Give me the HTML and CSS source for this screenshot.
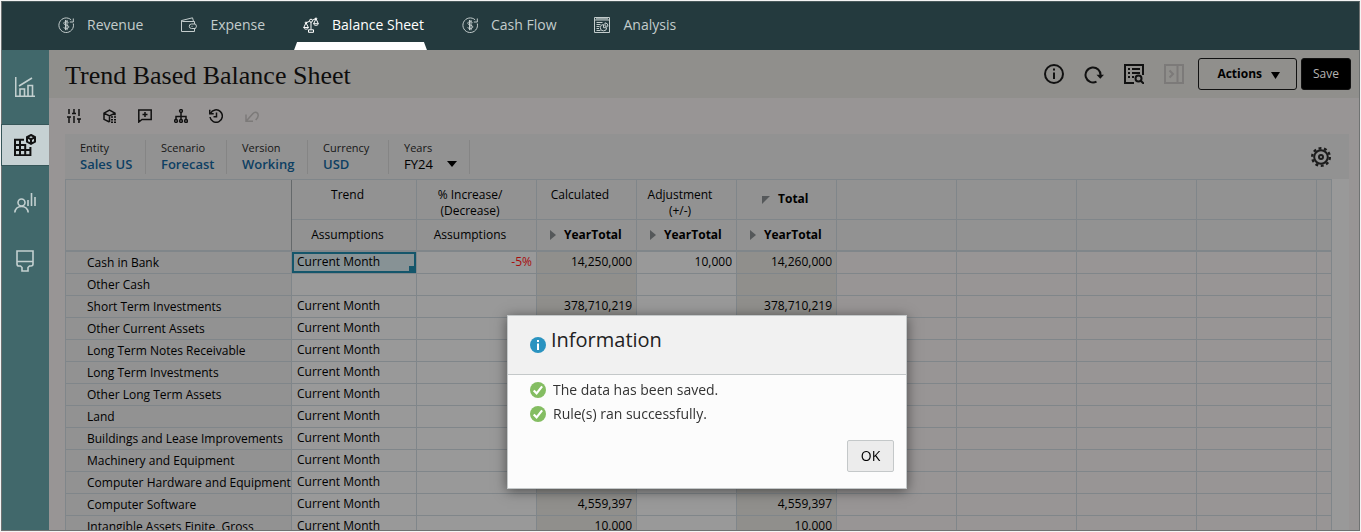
FILE: index.html
```html
<!DOCTYPE html>
<html lang="en">
<head>
    <meta charset="UTF-8">
    <meta name="viewport" content="width=device-width, initial-scale=1.0">
    <title>Trend Based Balance Sheet</title>
    <link rel="stylesheet" href="styles.css">
</head>
<body>

<!-- Shared icons -->
<svg class="sprite" aria-hidden="true">
    <symbol id="icon-money" viewBox="0 0 16 16">
        <path d="M15.300 6.500A7.300 7.300 0 1 1 13.200 2.900M15.300 1.500v3.500h-3.500M10.600 5.800C10.200 5 9.300 4.700 8.200 4.700c-1.400 0-2.400.6-2.400 1.600 0 2.400 5 1.100 5 3.500 0 1.100-1.100 1.800-2.500 1.800-1.300 0-2.300-.5-2.700-1.400M7.500 3v10.200M9 3v10.200"/>
    </symbol>
    <symbol id="icon-check" viewBox="0 0 16 16">
        <circle cx="8" cy="8" r="8" fill="#84bd62"/>
        <path d="M3.700 8.500l2.900 2.900 5.500-7" fill="none" stroke="#fff" stroke-width="2.200"/>
    </symbol>
</svg>

<div class="app">
    <nav class="tabs">
        <a class="tab" href="#"><svg class="tab-icon"><use href="#icon-money"/></svg>Revenue</a>
        <a class="tab" href="#">
            <svg class="tab-icon" viewBox="0 0 16 16"><path d="M13.500 7V4.500H1.500a1 1 0 0 1-1-1M.5 3.500v11h13v-3M.7 3.500L11.500.8l1 3.500M10.500 7h4l1 2.200-1 2.300h-4a2.200 2.200 0 0 1 0-4.500zM10.500 9.300h1"/></svg>Expense</a>
        <a class="tab active" href="#">
            <svg class="tab-icon" viewBox="0 0 16 16"><path d="M8 5v7.500M5.500 15.300v-2.500h5v2.500zM3 5.800L6.500 4.300M9.500 3.200L13 1.500M3 5.800L.8 10.500M3 5.800l2.400 4.700M13 1.700l-2.300 5M13 1.700l2.300 5M.6 10.500h4.900M10.500 6.700h4.900"/><path d="M.8 10.500c.3 2.200 4.300 2.200 4.600 0M10.700 6.700c.3 2.200 4.300 2.200 4.600 0"/><circle cx="8" cy="3.700" r="1.500"/><circle cx="13" cy="1.700" r=".8"/><circle cx="3" cy="5.800" r=".8"/></svg>Balance Sheet</a>
        <a class="tab" href="#"><svg class="tab-icon"><use href="#icon-money"/></svg>Cash Flow</a>
        <a class="tab" href="#">
            <svg class="tab-icon" viewBox="0 0 16 16"><path d="M.5.5h15v15H.5zM.5 3h15M2 1.800h12M2.500 5.500h6M2.500 7.500h4M2.500 9.500h3M2.500 11.500h2.500M2.500 13.500h4M9.500 7.500a3.200 3.200 0 1 0 3.200 3.200H9.500zM11 9.200V5.800a3.300 3.300 0 0 1 3 3.400z"/></svg>Analysis</a>
    </nav>

    <div class="body">
        <nav class="sidebar">
            <a class="side-link" href="#" aria-label="Dashboards">
                <svg width="20" height="20" viewBox="0 0 20 20"><path d="M.7 0v19.300H20M4 9l13-8M5 19v-7h4.500v7M13 19V8.500h4.500V19"/></svg>
            </a>
            <a class="side-link active" href="#" aria-label="Forms">
                <svg width="22" height="22" viewBox="0 0 22 22"><path d="M10 5.800H1v15.400h15.400V13M1 11h11M1 16h15.400M6 5.800v15.400M11.200 10v11.200M17 1l4 2v4.600l-4 2.300-4-2.300V3zM13 3.200l4 2.200 4-2.200M17 5.200v4.500"/></svg>
            </a>
            <a class="side-link" href="#" aria-label="Users">
                <svg width="22" height="20" viewBox="0 0 22 20"><circle cx="7.500" cy="9.500" r="3.500"/><path d="M.8 19.500c.5-4 3.300-6 6.700-6s6.200 2 6.700 6M14 7v6M17.500 0v13M21 4v9"/></svg>
            </a>
            <a class="side-link" href="#" aria-label="Display">
                <svg width="18" height="22" viewBox="0 0 18 22"><path d="M1 1h16v13c0 1.500-.6 2-2 2h-1.500L12 17.500V21H6v-3.500L4.500 16H3c-1.400 0-2-.5-2-2zM1 11.500h16"/></svg>
            </a>
        </nav>

        <main class="content">
            <header class="title-bar">
                <h1>Trend Based Balance Sheet</h1>
                <div class="title-tools">
                    <button class="icon-btn" aria-label="Information">
                        <svg width="20" height="20" viewBox="0 0 20 20"><circle cx="10" cy="10" r="9"/><path d="M10 8.500V15M10 4.500v2"/></svg>
                    </button>
                    <button class="icon-btn" aria-label="Refresh">
                        <svg width="20" height="20" viewBox="0 0 20 20"><path d="M12.500 17.600A7.500 7.500 0 1 1 16.500 11.500"/><path class="solid" d="M12.500 10.800h7.500l-3.700 4z"/></svg>
                    </button>
                    <button class="icon-btn" aria-label="Details">
                        <svg width="20" height="20" viewBox="0 0 20 20"><path d="M10 19H1V1h18v10M4 5h2M8 5h8M4 9h2M8 9h8M4 13h2M8 13h2M16.500 16.500L20 20"/><circle cx="14.500" cy="14.500" r="3"/></svg>
                    </button>
                    <button class="icon-btn" aria-label="Open panel" disabled>
                        <svg width="20" height="20" viewBox="0 0 20 20"><path d="M1 1h18v18H1zM13.500 1v18M5.500 6.500L9 10l-3.500 3.500"/></svg>
                    </button>
                </div>
                <button class="btn">Actions <svg width="9" height="7" viewBox="0 0 9 7"><path d="M0 0h9L4.500 7z"/></svg></button>
                <button class="btn primary">Save</button>
            </header>

            <div class="toolbar">
                <button class="icon-btn" aria-label="Adjust">
                    <svg width="14" height="14" viewBox="0 0 14 14"><path d="M2 0v5M2 8v6M0 8h4M7 0v4M5 4.500h4M7 7v7M12 0v7M10 10h4M12 10v4"/></svg>
                </button>
                <button class="icon-btn" aria-label="Cube">
                    <svg width="14" height="14" viewBox="0 0 14 14"><path d="M6.500 13L1 10.300V4.200L6.500 1 12 4.200v2M1 4.200L6.500 7 12 4.200M6.500 7v6"/><path stroke-dasharray="2 1" d="M8 8h6M8 10.700h6M8 13.300h6"/></svg>
                </button>
                <button class="icon-btn" aria-label="Comment">
                    <svg width="14" height="14" viewBox="0 0 14 14"><path d="M.8 13V1h12.400v9.500H4zM7 3v5M4.500 5.500h5"/></svg>
                </button>
                <button class="icon-btn" aria-label="Hierarchy">
                    <svg width="14" height="14" viewBox="0 0 14 14"><circle cx="7" cy="2" r="1.400"/><circle cx="2" cy="12" r="1.400"/><circle cx="7" cy="12" r="1.400"/><circle cx="12" cy="12" r="1.400"/><path d="M7 3.500v7M2 10.500v-3h10v3"/></svg>
                </button>
                <button class="icon-btn" aria-label="History">
                    <svg width="14" height="14" viewBox="0 0 14 14"><path d="M1.500 4.500A6.200 6.200 0 1 1 1 8M.7.8v4h4M7.500 3.500v4.200H4.500"/></svg>
                </button>
                <button class="icon-btn" aria-label="Undo" disabled>
                    <svg width="14" height="14" viewBox="0 0 14 14"><path d="M1 5.500v6.800h7M1.500 11.800L8 4.500c2.300-2.500 5.300-.8 5.200 2-.1 2-1.200 3-2.500 4.500"/></svg>
                </button>
            </div>

            <div class="pov">
                <div class="dim"><span class="dim-name">Entity</span><a href="#">Sales US</a></div>
                <div class="dim"><span class="dim-name">Scenario</span><a href="#">Forecast</a></div>
                <div class="dim"><span class="dim-name">Version</span><a href="#">Working</a></div>
                <div class="dim"><span class="dim-name">Currency</span><a href="#">USD</a></div>
                <div class="dim">
                    <label class="dim-name" for="years">Years</label>
                    <div class="picker">
                        <select id="years"><option>FY24</option></select>
                        <svg width="10" height="6" viewBox="0 0 10 6"><path d="M0 0h10L5 6z"/></svg>
                    </div>
                </div>
                <button class="icon-btn settings" aria-label="Settings">
                    <svg width="20" height="20" viewBox="0 0 20 20"><circle cx="10" cy="10" r="6.800"/><circle cx="10" cy="10" r="2"/><circle class="teeth" cx="10" cy="10" r="8.800"/></svg>
                </button>
            </div>

            <div class="grid-wrap">
                <table class="grid">
                    <colgroup>
                        <col class="c-name"><col class="c-trend"><col class="c-wide"><col class="c-mid"><col class="c-mid"><col class="c-mid">
                        <col class="c-wide"><col class="c-wide"><col class="c-wide"><col class="c-wide"><col>
                    </colgroup>
                    <thead>
                        <tr class="head-top">
                            <td class="corner" rowspan="2"></td>
                            <th>Trend</th>
                            <th>% Increase/<br>(Decrease)</th>
                            <th>Calculated</th>
                            <th>Adjustment<br>(+/-)</th>
                            <th class="member total"><svg width="8" height="8" viewBox="0 0 8 8"><path d="M0 0h8L0 8z"/></svg>Total</th>
                            <th></th><th></th><th></th><th></th><th></th>
                        </tr>
                        <tr class="head-sub">
                            <th>Assumptions</th>
                            <th>Assumptions</th>
                            <th class="member"><svg width="6" height="10" viewBox="0 0 6 10"><path d="M0 0l6 5-6 5z"/></svg>YearTotal</th>
                            <th class="member"><svg width="6" height="10" viewBox="0 0 6 10"><path d="M0 0l6 5-6 5z"/></svg>YearTotal</th>
                            <th class="member"><svg width="6" height="10" viewBox="0 0 6 10"><path d="M0 0l6 5-6 5z"/></svg>YearTotal</th>
                            <th></th><th></th><th></th><th></th><th></th>
                        </tr>
                    </thead>
                    <tbody>
                        <tr><th>Cash in Bank</th><td class="selected">Current Month</td><td class="num neg">-5%</td><td class="num calc">14,250,000</td><td class="num">10,000</td><td class="num calc">14,260,000</td><td></td><td></td><td></td><td></td><td></td></tr>
                        <tr><th>Other Cash</th><td></td><td></td><td class="calc"></td><td></td><td class="calc"></td><td></td><td></td><td></td><td></td><td></td></tr>
                        <tr><th>Short Term Investments</th><td>Current Month</td><td></td><td class="num calc">378,710,219</td><td></td><td class="num calc">378,710,219</td><td></td><td></td><td></td><td></td><td></td></tr>
                        <tr><th>Other Current Assets</th><td>Current Month</td><td></td><td class="calc"></td><td></td><td class="calc"></td><td></td><td></td><td></td><td></td><td></td></tr>
                        <tr><th>Long Term Notes Receivable</th><td>Current Month</td><td></td><td class="calc"></td><td></td><td class="calc"></td><td></td><td></td><td></td><td></td><td></td></tr>
                        <tr><th>Long Term Investments</th><td>Current Month</td><td></td><td class="calc"></td><td></td><td class="calc"></td><td></td><td></td><td></td><td></td><td></td></tr>
                        <tr><th>Other Long Term Assets</th><td>Current Month</td><td></td><td class="calc"></td><td></td><td class="calc"></td><td></td><td></td><td></td><td></td><td></td></tr>
                        <tr><th>Land</th><td>Current Month</td><td></td><td class="calc"></td><td></td><td class="calc"></td><td></td><td></td><td></td><td></td><td></td></tr>
                        <tr><th>Buildings and Lease Improvements</th><td>Current Month</td><td></td><td class="calc"></td><td></td><td class="calc"></td><td></td><td></td><td></td><td></td><td></td></tr>
                        <tr><th>Machinery and Equipment</th><td>Current Month</td><td></td><td class="calc"></td><td></td><td class="calc"></td><td></td><td></td><td></td><td></td><td></td></tr>
                        <tr><th>Computer Hardware and Equipment</th><td>Current Month</td><td></td><td class="calc"></td><td></td><td class="calc"></td><td></td><td></td><td></td><td></td><td></td></tr>
                        <tr><th>Computer Software</th><td>Current Month</td><td></td><td class="num calc">4,559,397</td><td></td><td class="num calc">4,559,397</td><td></td><td></td><td></td><td></td><td></td></tr>
                        <tr><th>Intangible Assets Finite, Gross</th><td>Current Month</td><td></td><td class="num calc">10,000</td><td></td><td class="num calc">10,000</td><td></td><td></td><td></td><td></td><td></td></tr>
                    </tbody>
                </table>
            </div>
        </main>
    </div>
</div>

<!-- Save confirmation -->
<div class="overlay">
    <div class="dialog" role="dialog" aria-labelledby="dialog-title">
        <div class="dialog-head">
            <svg width="16" height="16" viewBox="0 0 16 16"><circle cx="8" cy="8" r="8" fill="#2a93c0"/><path d="M7 3h2v2H7zM7 6.500h2V13H7z" fill="#fff"/></svg>
            <h2 id="dialog-title">Information</h2>
        </div>
        <ul class="messages">
            <li><svg width="16" height="16"><use href="#icon-check"/></svg>The data has been saved.</li>
            <li><svg width="16" height="16"><use href="#icon-check"/></svg>Rule(s) ran successfully.</li>
        </ul>
        <div class="dialog-foot">
            <button class="ok-btn">OK</button>
        </div>
    </div>
</div>

</body>
</html>
```
FILE: styles.css
```css
* {
    box-sizing: border-box;
}
body {
    margin: 0;
    padding: 1px;
    height: 100vh;
    overflow: hidden;
    background-color: #f4f4f4;
    font-family: "Open Sans", "Noto Sans", sans-serif;
    font-size: 12px;
    color: #000;
}
button, select {
    font-family: inherit;
    color: inherit;
}
svg {
    display: block;
    flex: none;
}
.sprite {
    position: absolute;
    width: 0;
    height: 0;
}
.app {
    height: 100%;
    display: flex;
    flex-direction: column;
    border: 1px solid #6f7272;
    border-top-color: #4a5a5c;
}

/* Top navigation */
.tabs {
    flex: none;
    display: flex;
    gap: 38px;
    height: 48px;
    padding-left: 56px;
    background-color: #243a3e;
}
.tab {
    position: relative;
    display: flex;
    align-items: center;
    gap: 13px;
    padding-bottom: 3px;
    font-size: 14px;
    color: #c3cccc;
    text-decoration: none;
}
.tab.active {
    color: #fff;
}
.tab.active::after {
    content: "";
    position: absolute;
    left: -9px;
    right: -3px;
    bottom: 0;
    height: 8px;
    background-color: #fff;
    clip-path: polygon(3px 0, calc(100% - 3px) 0, 100% 100%, 0 100%);
}
.tab-icon {
    width: 16px;
    height: 16px;
    fill: none;
    stroke: currentColor;
    stroke-width: 1;
}

/* Left navigation */
.body {
    flex: 1;
    min-height: 0;
    display: flex;
}
.sidebar {
    flex: none;
    width: 47px;
    padding-top: 17px;
    display: flex;
    flex-direction: column;
    gap: 18px;
    background-color: #41686b;
}
.side-link {
    height: 40px;
    display: flex;
    align-items: center;
    justify-content: center;
    padding-right: 2px;
}
.side-link svg {
    fill: none;
    stroke: #c3d0d0;
    stroke-width: 1.6;
}
.side-link.active {
    background-color: #c6d1d3;
    box-shadow: 0 0 0 1px #365659;
}
.side-link.active svg {
    stroke: #111;
    stroke-width: 2;
}

/* Title bar */
.content {
    flex: 1;
    min-width: 0;
    display: flex;
    flex-direction: column;
    background-color: #989595;
}
.title-bar {
    flex: none;
    height: 48px;
    display: flex;
    align-items: center;
    padding: 0 8px 0 16px;
    background-color: #908f8c;
}
h1 {
    margin: 0;
    padding-top: 4px;
    flex: 1;
    font-family: Georgia, "Liberation Serif", serif;
    font-size: 26px;
    line-height: 32px;
    font-weight: normal;
    color: #0e0d0c;
}
.icon-btn {
    padding: 0;
    border: none;
    background: none;
    cursor: pointer;
}
.icon-btn svg {
    fill: none;
    stroke: #111;
    stroke-width: 1.5;
}
.icon-btn .solid {
    fill: #111;
    stroke: none;
}
.icon-btn:disabled svg {
    stroke: #7c7a79;
}
.title-tools {
    display: flex;
    gap: 20px;
    margin-right: 14px;
}
.title-tools svg {
    stroke-width: 2;
}
.btn {
    height: 32px;
    display: flex;
    align-items: center;
    gap: 9px;
    padding: 0 16px 2px 18px;
    border: 1px solid #111;
    border-radius: 3px;
    background: none;
    font-size: 12px;
    font-weight: 700;
}
.btn svg {
    margin-top: 4px;
}
.btn.primary {
    margin-left: 4px;
    padding: 0 11px 2px;
    background-color: #000;
    color: #b5b3b2;
    font-weight: normal;
}

/* Form toolbar */
.toolbar {
    flex: none;
    width: 210px;
    height: 36px;
    display: flex;
    align-items: center;
    justify-content: space-between;
    padding-left: 18px;
}

/* Point of view bar */
.pov {
    flex: none;
    height: 45px;
    margin: 0 10px 0 16px;
    display: flex;
    align-items: center;
    background-color: #929292;
}
.dim {
    width: 81px;
    height: 34px;
    padding-left: 15px;
    display: flex;
    flex-direction: column;
    border-right: 1px solid #858585;
}
.dim-name {
    font-size: 11px;
    line-height: 15px;
    color: #161616;
}
.dim a {
    font-size: 13px;
    line-height: 18px;
    font-weight: 600;
    color: #0d3f63;
    text-decoration: none;
}
.picker {
    display: grid;
    align-items: center;
    width: 53px;
}
.picker select, .picker svg {
    grid-area: 1 / 1;
}
.picker select {
    width: 53px;
    padding: 0;
    border: none;
    background: none;
    appearance: none;
    font-size: 13px;
    line-height: 18px;
}
.picker svg {
    justify-self: end;
    pointer-events: none;
}
.settings {
    margin-left: auto;
    margin-right: 18px;
}
.settings svg {
    stroke: #1c1c1c;
    stroke-width: 2;
}
.settings .teeth {
    stroke-width: 2.4;
    stroke-dasharray: 2.9 2.63;
}

/* Data grid */
.grid-wrap {
    flex: 1;
    min-height: 0;
    margin: 0 10px 0 16px;
    padding-right: 17px;
    overflow: hidden;
    background-color: #999;
}
.grid {
    width: 100%;
    table-layout: fixed;
    border-collapse: separate;
    border-spacing: 0;
    border-top: 1px solid #80868a;
    border-left: 1px solid #80868a;
}
.c-name {
    width: 226px;
}
.c-trend {
    width: 125px;
}
.c-wide {
    width: 120px;
}
.c-mid {
    width: 100px;
}
.grid th, .grid td {
    height: 22px;
    padding: 0 4px 2px 5px;
    border-right: 1px solid #80868a;
    border-bottom: 1px solid #80868a;
    line-height: 16px;
    font-weight: normal;
    text-align: left;
    white-space: nowrap;
}
.grid td {
    background-color: #999;
}
.grid td:nth-child(n+7) {
    background-color: #989595;
}
.grid th, .grid td.corner {
    background-color: #929292;
}
.grid thead th {
    padding: 0 13px 0 0;
    text-align: center;
}
.grid .head-top th {
    height: 40px;
    padding-top: 7px;
    vertical-align: top;
}
.grid .head-sub th {
    height: 32px;
    border-bottom-width: 2px;
}
.grid td.corner {
    border-right-color: #65696b;
    border-bottom-width: 2px;
}
.grid thead .member {
    padding-left: 13px;
    padding-right: 0;
    font-weight: 700;
    text-align: left;
}
.grid .head-top .total {
    padding-top: 11px;
    padding-left: 25px;
}
.member svg {
    display: inline-block;
    margin-right: 8px;
    vertical-align: -1px;
    fill: #55585a;
}
.grid tbody th {
    padding: 0 0 0 21px;
}
.grid .num {
    text-align: right;
}
.grid .calc {
    background-color: #908f8c;
}
.grid .neg {
    color: #a80c0c;
}
.grid td.selected {
    background: linear-gradient(#14566b, #14566b) right bottom / 7px 7px no-repeat #879295;
    box-shadow: inset 0 0 0 2px #14566b;
}

/* Message dialog */
.overlay {
    position: fixed;
    inset: 0;
    display: flex;
    justify-content: center;
    align-items: flex-start;
    padding: 315px 0 0 53px;
}
.dialog {
    width: 400px;
    border: 1px solid #c4c8c9;
    background-color: #fcfcfc;
    box-shadow: 0 2px 12px rgba(0, 0, 0, 0.5);
    color: #333;
}
.dialog-head {
    height: 59px;
    display: flex;
    align-items: center;
    gap: 5px;
    padding-left: 22px;
    border-bottom: 1px solid #c4c8c9;
    background-color: #f1f1f1;
}
.dialog-head h2 {
    margin: 0;
    padding-bottom: 10px;
    font-size: 20px;
    line-height: 28px;
    font-weight: normal;
    color: #222;
}
.messages {
    margin: 0;
    padding: 3px 22px 0;
    list-style: none;
    font-size: 14px;
    line-height: 24px;
}
.messages li {
    display: flex;
    align-items: center;
    gap: 7px;
}
.dialog-foot {
    display: flex;
    justify-content: flex-end;
    padding: 14px 12px 16px;
}
.ok-btn {
    width: 47px;
    height: 32px;
    padding: 0 0 2px;
    border: 1px solid #c4c8c9;
    border-radius: 2px;
    background-color: #ececec;
    font-size: 14px;
    color: #000;
}
```
